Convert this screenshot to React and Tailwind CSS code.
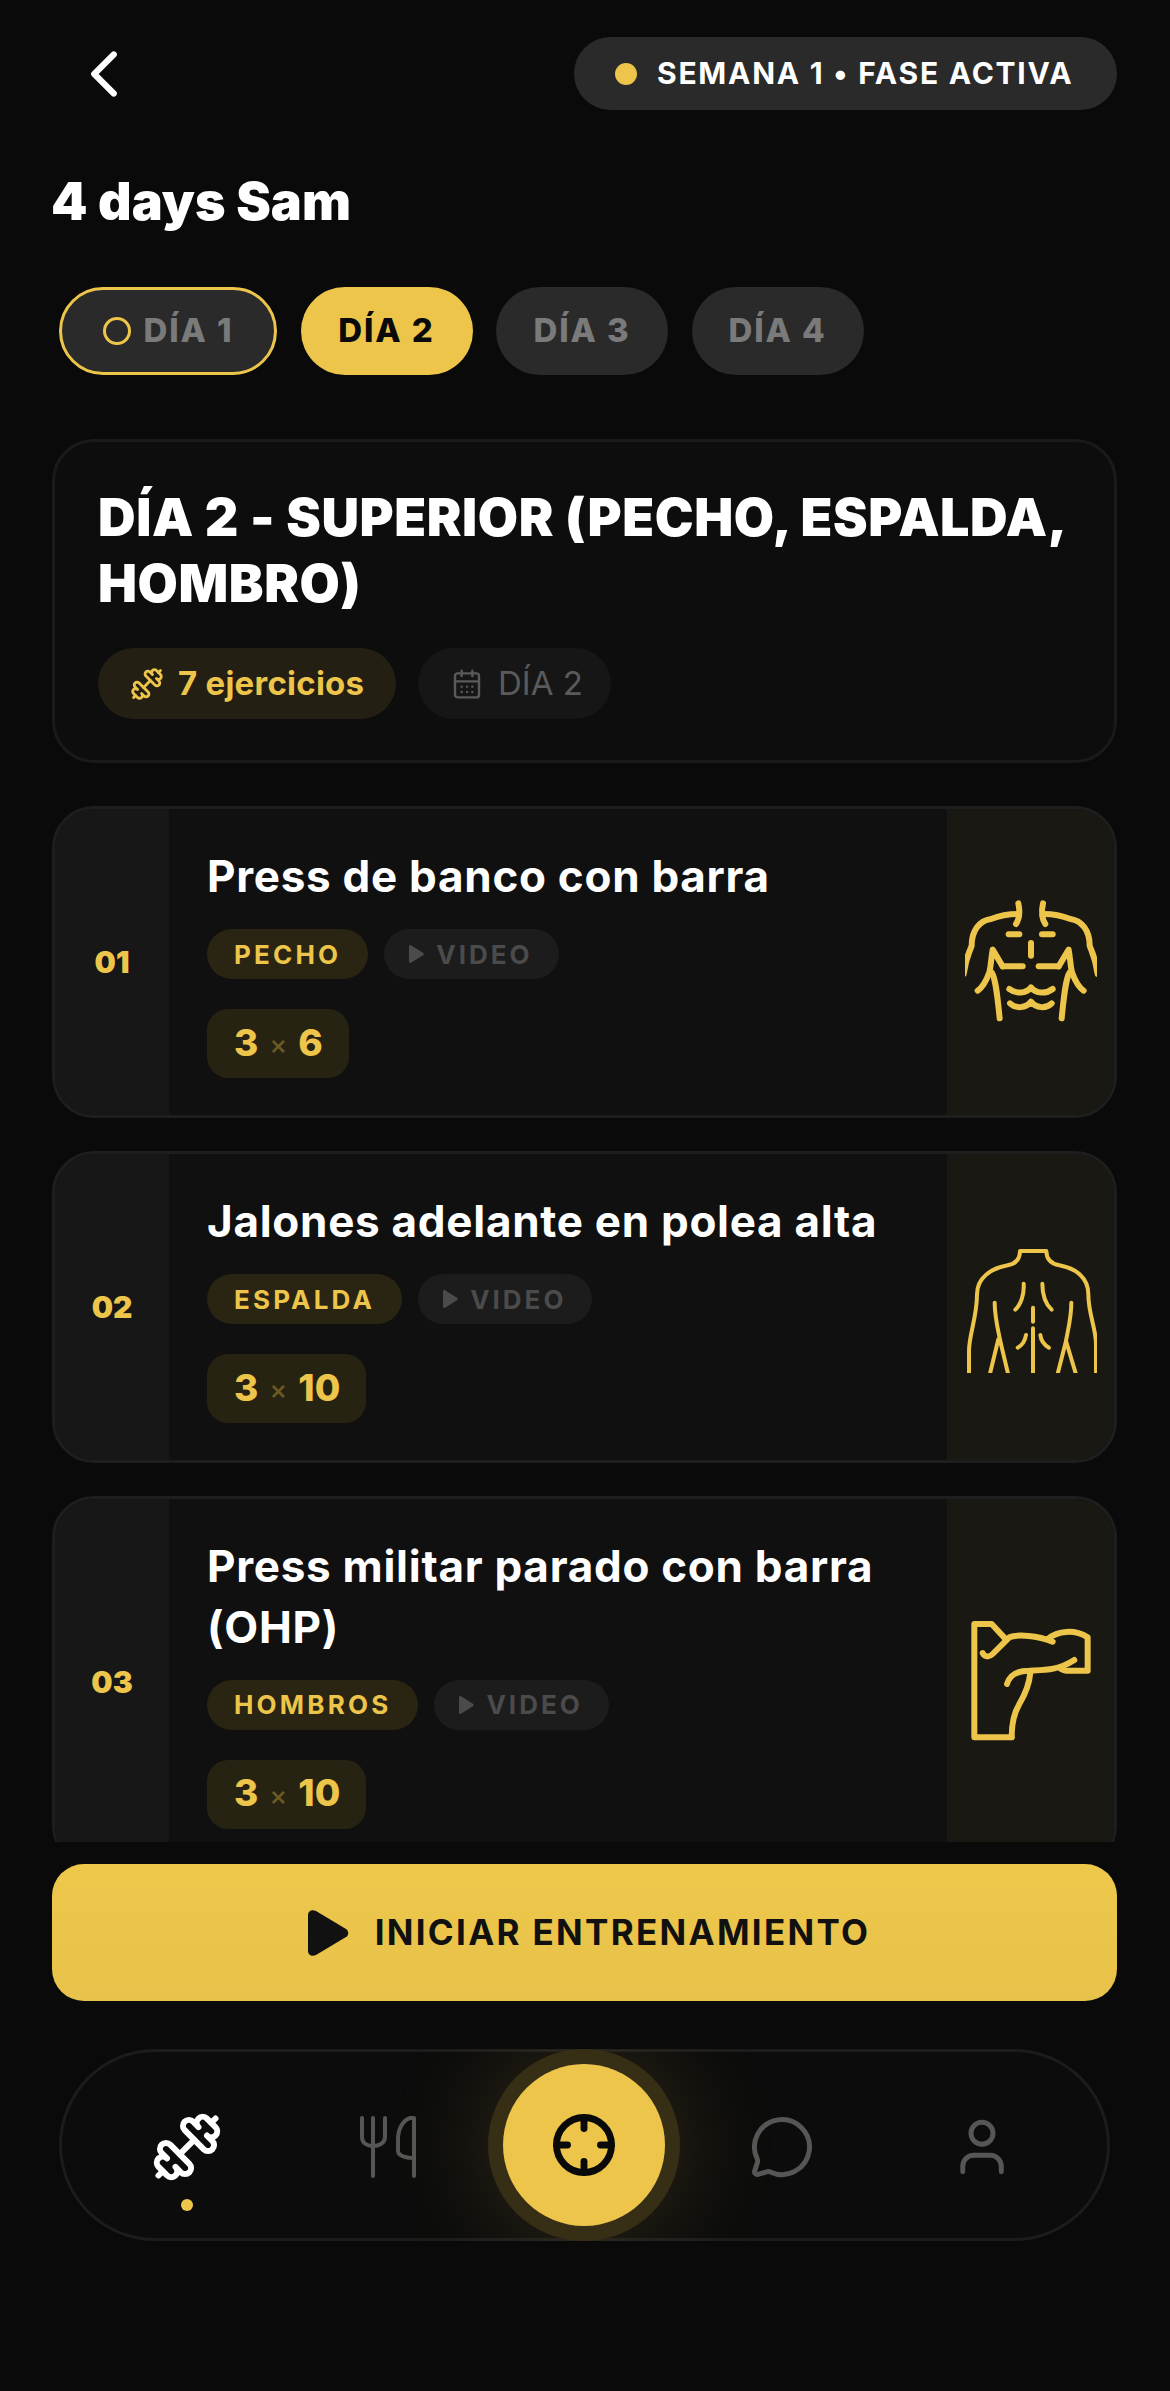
import React from "react";
import { ChevronLeft, Dumbbell, CalendarDays, Crosshair, MessageCircle, User } from "lucide-react";

function Chest() {
  const half = (
    <>
      <path d="M352 133C358 160 355 180 345 195" />
      <path d="M350 165C320 165 295 170 270 180C235 185 212 215 212 260C205 280 195 295 188 345" />
      <path d="M323 226H355" />
      <path d="M305 322H365" />
      <path d="M305 322L275 272C270 300 270 320 265 340C258 360 245 385 230 395" />
      <path d="M272 340C285 360 290 420 296 478" />
    </>
  );
  return (
    <svg width="132" height="132" viewBox="192 111 396 396" fill="none" stroke="#edc54a" strokeWidth="18" strokeLinecap="round" strokeLinejoin="round">
      {half}
      <g transform="matrix(-1 0 0 1 778 0)">{half}</g>
      <path d="M390 252V290" />
      <path d="M325 390C345 405 375 405 390 385C405 405 435 405 455 390" />
      <path d="M327 433C345 450 375 448 390 428C405 448 435 450 452 433" />
    </svg>
  );
}

function Back() {
  return (
    <svg width="132" height="132" viewBox="192 90 396 396" fill="none" stroke="#edc54a" strokeWidth="12" strokeLinecap="round" strokeLinejoin="round">
      <path d="M204 500V420C204 370 228 320 228 250C228 200 270 172 320 163C345 158 357 145 357 120H436C436 145 450 158 475 163C525 172 562 200 562 250C562 310 585 350 585 400V500" />
      <path d="M281 275C281 320 292 360 300 400L324 500" />
      <path d="M292 385L264 500" />
      <path d="M511 275C511 320 500 360 495 390L528 500" />
      <path d="M495 390L467 500" />
      <path d="M368 218C370 250 360 280 343 296" />
      <path d="M424 218C424 250 435 280 452 296" />
      <path d="M396 290V332" />
      <path d="M396 352V500" />
      <path d="M375 372C372 390 365 402 350 410" />
      <path d="M418 372C420 390 430 402 444 410" />
    </svg>
  );
}

function Shoulder() {
  return (
    <svg width="132" height="132" viewBox="192 171 396 396" fill="none" stroke="#edc54a" strokeWidth="18" strokeLinecap="round" strokeLinejoin="round">
      <path d="M332 535H220V195H272L312 238" />
      <path d="M245 282C250 295 265 295 275 285L325 235C350 225 410 230 455 248" />
      <path d="M440 240C470 215 520 210 560 235V335H495C490 335 485 333 480 330" />
      <path d="M318 375C325 350 345 335 385 335C430 333 470 335 520 303" />
      <path d="M388 340C385 380 370 410 355 435C340 460 332 490 332 535" />
    </svg>
  );
}

function Utensils() {
  return (
    <svg width="60" height="64" viewBox="0 0 60 64" fill="none" stroke="#565656" strokeWidth="4" strokeLinecap="round" strokeLinejoin="round" className="ml-[4px]">
      <path d="M4 3V22C4 28 9 31 15 31C21 31 27 28 27 22V3" />
      <path d="M15 3V61" />
      <path d="M56 61V3H52C45 5 40 14 40 24V36C40 40 46 43 56 43" />
    </svg>
  );
}

function Exercise({ n, title, tag, reps, icon, lines2 }) {
  return (
    <div className={`flex shrink-0 overflow-hidden rounded-[42px] border-[3px] border-[#1e1e1e] bg-[#101010] ${lines2 ? "h-[372px]" : "h-[312px]"}`}>
      <div className="flex w-[114px] shrink-0 items-center justify-center bg-[#171717] text-[30px] font-black text-[#edc54a]">{n}</div>
      <div className="flex min-w-0 flex-1 flex-col justify-center pl-[38px] pr-[20px]">
        <div className="text-[44px] leading-[61px] font-bold tracking-[0.72px] text-white">{title}</div>
        <div className="mt-[22px] flex gap-[16px]">
          <div className="flex h-[50px] items-center rounded-full bg-[#2a2412] px-[27px] text-[26px] font-bold tracking-[3.2px] text-[#edc54a]">{tag}</div>
          <div className="flex h-[50px] items-center gap-[12px] rounded-full bg-[#1c1c1c] pl-[25px] pr-[26px] text-[26px] font-bold tracking-[3px] text-[#4b4b4b]">
            <svg width="15" height="18" viewBox="0 0 15 18" fill="#4b4b4b"><path d="M0 1.5C0 .4 1 -.3 2 .3L14 7.8C15 8.4 15 9.6 14 10.2L2 17.7C1 18.3 0 17.6 0 16.5Z" /></svg>
            VIDEO
          </div>
        </div>
        <div className="mt-[30px] flex h-[69px] w-fit items-center gap-[11px] rounded-[21px] bg-[#272312] pb-[2px] pl-[27px] pr-[26px] text-[37px] font-extrabold text-[#edc54a]">
          <span>3</span>
          <span className="pt-[6px] text-[27px] font-medium text-[#6b5a22]">×</span>
          <span>{reps}</span>
        </div>
      </div>
      <div className="flex w-[167px] shrink-0 items-center justify-center bg-[#191812]">{icon}</div>
    </div>
  );
}

export default function App() {
  return (
    <div className="flex h-[2391px] w-[1170px] flex-col overflow-hidden bg-[#0a0a0a] pl-[52px] pr-[53px] [font-family:Inter,sans-serif]">
      <div className="mt-[37px] flex h-[73px] items-center justify-between">
        <ChevronLeft size={78} strokeWidth={1.9} className="ml-[13px] text-white" />
        <div className="flex h-[73px] w-[543px] items-center gap-[20px] rounded-full bg-[#2a2a2a] pl-[41px] text-[30px] font-bold tracking-[1.75px] whitespace-nowrap text-white">
          <span className="h-[22px] w-[22px] shrink-0 rounded-full bg-[#edc54a]" />
          SEMANA 1 • FASE ACTIVA
        </div>
      </div>

      <h1 className="-ml-[1px] mt-[62px] text-[52px] leading-[60px] font-black tracking-[0.1px] text-white">4 days Sam</h1>

      <div className="mt-[55px] flex gap-[23.5px] pl-[7px] text-[33px] font-extrabold tracking-[1.9px]">
        <div className="flex h-[88px] w-[218px] items-center justify-center gap-[13px] rounded-full border-[3px] border-[#edc54a] bg-[#2a2a2a] text-[#7a7a7a]">
          <span className="h-[28px] w-[28px] rounded-full border-[3px] border-[#edc54a]" />
          DÍA 1
        </div>
        <div className="flex h-[88px] w-[172px] items-center justify-center rounded-full bg-[#edc54a] text-[#0a0a0a]">DÍA 2</div>
        <div className="flex h-[88px] w-[172px] items-center justify-center rounded-full bg-[#2a2a2a] text-[#7a7a7a]">DÍA 3</div>
        <div className="flex h-[88px] w-[172px] items-center justify-center rounded-full bg-[#2a2a2a] text-[#7a7a7a]">DÍA 4</div>
      </div>

      <div className="mt-[64px] h-[324px] rounded-[42px] border-[3px] border-[#1a1a1a] bg-[#0d0d0d] pl-[43px] pr-[10px] pt-[43px]">
        <div className="text-[52px] leading-[66px] font-black tracking-[0.6px] text-white">DÍA 2 - SUPERIOR (PECHO, ESPALDA, HOMBRO)</div>
        <div className="mt-[31px] flex gap-[22px]">
          <div className="flex h-[71px] w-[298px] items-center gap-[14px] rounded-full bg-[#231f12] pl-[32px] text-[33px] font-bold tracking-[0.25px] text-[#edc54a]">
            <Dumbbell size={34} strokeWidth={2} />
            7 ejercicios
          </div>
          <div className="flex h-[71px] w-[193px] items-center gap-[15px] rounded-full bg-[#161616] pl-[33px] text-[33px] font-normal text-[#5a5a5a]">
            <CalendarDays size={32} strokeWidth={1.8} />
            DÍA 2
          </div>
        </div>
      </div>

      <div className="mt-[43px] flex h-[1036px] flex-col gap-[33px] overflow-hidden">
        <Exercise n="01" title="Press de banco con barra" tag="PECHO" reps="6" icon={<Chest />} />
        <Exercise n="02" title="Jalones adelante en polea alta" tag="ESPALDA" reps="10" icon={<Back />} />
        <Exercise n="03" title="Press militar parado con barra (OHP)" tag="HOMBROS" reps="10" icon={<Shoulder />} lines2 />
      </div>

      <div className="mt-[22px] flex h-[137px] shrink-0 items-center justify-center gap-[26px] rounded-[32px] bg-gradient-to-b from-[#eec84b] to-[#e8c24a] pl-[8px] text-[35px] font-bold tracking-[2.3px] text-[#111111]">
        <svg width="42" height="46" viewBox="0 0 42 46" fill="#111111"><path d="M1 5C1 1 5 -1 9 1L39 19C42 21 42 25 39 27L9 45C5 47 1 45 1 41Z" /></svg>
        INICIAR ENTRENAMIENTO
      </div>

      <div className="mx-[7px] mt-[48px] grid h-[192px] shrink-0 grid-cols-5 items-center overflow-hidden rounded-full bg-[#0c0c0c] px-[29px] shadow-[inset_0_0_0_3px_#1c1c1c]">
        <div className="relative mt-[3px] flex justify-center">
          <Dumbbell size={72} strokeWidth={2} className="text-white" />
          <span className="absolute top-[88px] h-[12px] w-[12px] rounded-full bg-[#edc54a]" />
        </div>
        <div className="mt-[3px] flex justify-center"><Utensils /></div>
        <div className="flex justify-center">
          <div className="flex h-[192px] w-[192px] shrink-0 items-center justify-center rounded-full bg-[#372e16] shadow-[0_0_110px_rgba(237,197,74,0.16)]">
            <div className="flex h-[162px] w-[162px] items-center justify-center rounded-full bg-[#edc54a]">
              <Crosshair size={66} strokeWidth={2.5} className="text-[#0a0a0a]" />
            </div>
          </div>
        </div>
        <div className="mt-[3px] flex justify-center"><MessageCircle size={66} strokeWidth={1.8} className="-ml-[2px] text-[#565656]" /></div>
        <div className="mt-[3px] flex justify-center"><User size={66} strokeWidth={1.8} className="text-[#565656]" /></div>
      </div>
    </div>
  );
}
